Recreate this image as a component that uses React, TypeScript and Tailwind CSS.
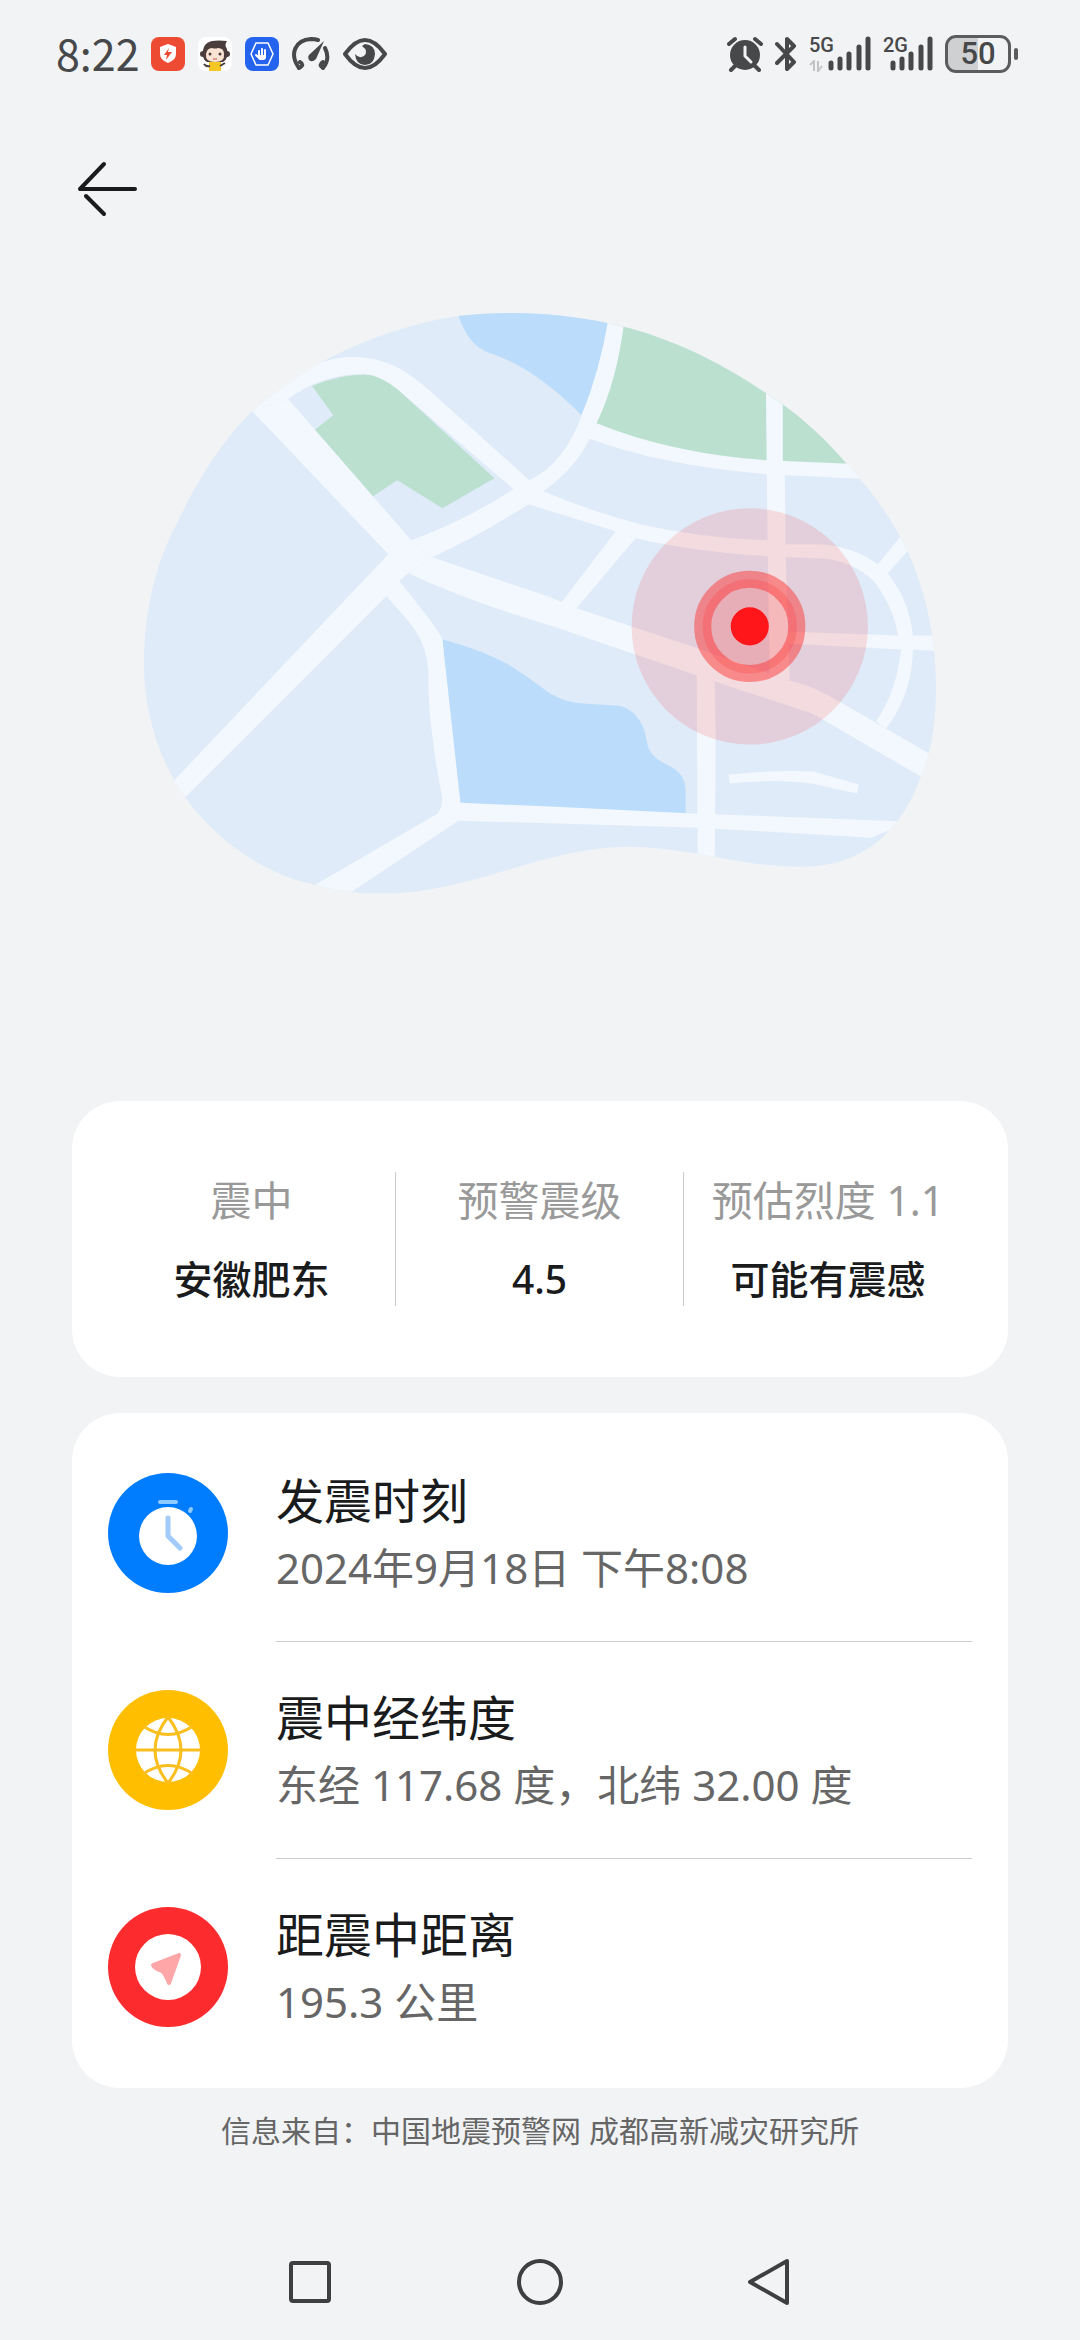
import React from 'react';

interface SummaryItem {
    label: string;
    value: string;
}

interface DetailItem {
    title: string;
    text: string;
    icon: React.ReactNode;
}

const BLOB =
    'M144 664 C144 610 156 561 178 521 C196 482 221 442 252 411 C271 395 296 377 320 363 C362 340 410 323 458 316 C476 314 494 313 512 313 C545 313 578 317 607 323 C665 335 718 361 765 393 C798 414 824 438 846 464 C867 486 885 510 899 536 C923 580 935 635 935 687 C935 720 931 750 920 776 C911 802 897 823 880 838 C858 857 832 866 800 866 C765 866 735 860 697 853 C672 849 650 846 627 846 C600 846 575 851 550 857 C490 873 440 893 380 893 C357 893 335 890 315 884 C262 873 217 840 185 797 C158 758 144 710 144 664 Z';

const ROADS = [
    // arc above the park
    'M252 411 L285 360 L320 363 Q337 356 353 357 Q382 357 407 373 L423 385 L529 480 L543 491 L528 504 L513 489 L397 389 Q380 375 363 374 Q322 374 288 399 Z',
    // north west avenue
    'M252 411 L288 399 L411 540 L432 557 L408 573 L388 554 Z',
    // south west avenue
    'M388 554 L173 781 L185 797 L386 596 L399 581 L408 573 L420 555 Z',
    // centre to the south junction
    'M386 596 Q407 619 415 630 Q427 648 428 672 Q428 710 432 735 Q436 768 442 798 Q442 808 437 813 L315 884 L347 894 L458 820 L460 802 L442 639 Q437 627 399 581 Z',
    // south street
    'M455 802 L550 806 L697 813 L910 821 L870 837 L697 827 L458 820 Z',
    // main street to the east
    'M432 557 L550 597 L576 608 L698 648 L788 680 Q812 685 840 702 L935 757 L925 779 L822 719 Q812 713 808 712 L714 681 L550 625 Q470 602 408 573 Z',
    // centre to the northern lake
    'M411 540 Q467 519 513 489 L529 480 Q565 462 581 415 Q599 372 608 318 L624 318 Q617 380 596 423 Q580 465 543 491 L528 504 Q480 535 432 557 Z',
    // middle street with the eastern ring
    'M543 491 Q592 512 640 524 Q700 538 767 540 L784 544 L817 544 Q850 545 877 564 L903 532 L910 547 L887 573 Q908 600 912 635 L940 635 L940 651 L912 649 Q911 695 885 728 L875 721 Q896 690 900 649 L785 643 L785 631 L897 635 Q893 608 873 581 Q850 559 817 558 L784 557 L767 556 Q690 551 635 538 L615 531 L528 504 Z',
    'M615 531 L635 538 L576 608 L561 602 Z',
    'M765 380 L782 380 L782 461 L784 475 L785 557 L789 680 L769 675 L767 556 L766 474 Z',
    'M596 423 Q670 453 765 460 L860 464 L870 479 L766 474 Q660 465 588 438 Z',
    'M696 674 L714 681 L715 735 L714 860 L697 860 Z',
    'M728 774 Q775 769 813 771 L858 784 L856 793 L810 783 Q777 778 729 783 Z',
];

const EpicenterMap: React.FC = () => (
    <svg viewBox="144 312 791 582" className="w-full h-auto block" role="img" aria-label="震中地图">
        <defs>
            <clipPath id="map-shape">
                <path d={BLOB} />
            </clipPath>
        </defs>
        <g clipPath="url(#map-shape)">
            <rect x="140" y="308" width="800" height="590" fill="#dfebf8" />
            <path d="M458 316 C466 338 476 349 492 354 C522 364 552 386 581 415 L600 390 L612 305 L456 305 Z" fill="#bbddfb" />
            <path d="M442 639 Q495 653 523 674 C545 688 552 700 582 703 L615 705 C632 706 644 722 646 740 C650 770 684 758 685 790 L685 815 L459 806 Z" fill="#bbddfb" />
            <path d="M312 386 Q345 372 377 375 L397 389 L494 478 L442 508 L397 480 L371 497 L314 430 L333 415 Z" fill="#bbe0cf" />
            <path d="M615 310 L860 310 L860 464 L765 463 Q670 456 590 424 Z" fill="#bbe0cf" />
            {ROADS.map(d => <path key={d} d={d} fill="#f2f8fd" />)}
        </g>
        <circle cx="749" cy="626" r="118" fill="#ff1a1a" fillOpacity="0.13" />
        <circle cx="749" cy="626" r="39" fill="#ff1a1a" fillOpacity="0.18" />
        <circle cx="749" cy="626" r="47" fill="none" stroke="#ff1a1a" strokeOpacity="0.42" strokeWidth="17" />
        <circle cx="749" cy="626" r="43" fill="none" stroke="#ff1a1a" strokeOpacity="0.18" strokeWidth="8" />
        <circle cx="749" cy="626" r="19" fill="#ff161b" />
    </svg>
);

const SignalBars: React.FC<{ label: string; data?: boolean }> = ({ label, data }) => (
    <div className={`relative flex justify-end h-[36px] ${data ? 'w-[62px]' : 'w-[50px]'}`}>
        <span className="absolute left-0 top-0 text-[20px] leading-[18px] font-medium font-[Roboto,sans-serif]">{label}</span>
        {data && (
            <svg width="16" height="12" viewBox="0 0 16 12" className="absolute left-0 bottom-0" fill="none" stroke="#c2c3c5" strokeWidth="2">
                <path d="M1 5 L5 1 V11 M9 1 V11 L13 6" />
            </svg>
        )}
        <svg width="44" height="36" viewBox="0 0 44 36" stroke="currentColor" strokeWidth="5" strokeLinecap="round" fill="none">
            <path d="M4 27 V32 M13 23 V32 M22 18 V32 M32 11 V32 M41 3 V32" />
        </svg>
    </div>
);

const StatusBar: React.FC = () => (
    <header className="flex items-center justify-between h-[108px] pl-14 pr-[62px] text-[#47484a]">
        <div className="flex items-center gap-[13px]">
            <time className="pb-1 text-[43px] leading-[48px] w-[82px] whitespace-nowrap font-['Noto_Sans_CJK_SC',sans-serif]">8:22</time>
            <svg width="34" height="34" viewBox="0 0 34 34">
                <rect width="34" height="34" rx="8" fill="#ee4b33" />
                <path d="M17 7 L25 10 V17 Q25 23 17 26 Q9 23 9 17 V10 Z" fill="#fff" />
                <path d="M18 11 L13 18 H16 L15 23 L21 15 H17 Z" fill="#ee4b33" />
            </svg>
            <svg width="34" height="34" viewBox="0 0 34 34">
                <rect width="34" height="34" rx="8" fill="#fff" />
                <path d="M11 25 H23 V34 H11 Z" fill="#f5c722" />
                <path d="M6 27 Q8 30 12 29 M27 26 L22 29" stroke="#4a3d3b" strokeWidth="2" fill="none" />
                <circle cx="5" cy="17" r="3" fill="#4a3d3b" />
                <circle cx="29" cy="17" r="3" fill="#4a3d3b" />
                <path d="M5 18 Q4 6 14 4 Q20 3 29 4 Q26 8 29 12 Q31 22 25 25 H9 Q5 23 5 18 Z" fill="#4a3d3b" />
                <path d="M8 17 Q9 11 14 11 Q17 12 20 11 Q26 11 26 17 Q27 25 17 25 Q7 25 8 17 Z" fill="#fbe3d3" />
                <circle cx="12" cy="17" r="1.5" fill="#4a3d3b" />
                <circle cx="22" cy="17" r="1.5" fill="#4a3d3b" />
                <path d="M15 22 H19" stroke="#d8837b" strokeWidth="1.5" />
            </svg>
            <svg width="34" height="34" viewBox="0 0 34 34">
                <rect width="34" height="34" rx="8" fill="#2463ee" />
                <path d="M11 6 H23 L28 17 L23 28 H11 L6 17 Z" fill="none" stroke="#fff" strokeWidth="1.5" />
                <path d="M14 19 V14 M17 18 V12 M20 19 V13 M11 18 L15 22" fill="none" stroke="#fff" strokeWidth="2" strokeLinecap="round" />
                <path d="M13 18 H21 V20 Q21 23 18 23 H15 L12 19 Z" fill="#fff" />
            </svg>
            <svg width="38" height="36" viewBox="0 0 38 36" fill="none" stroke="currentColor" strokeWidth="4" strokeLinecap="round">
                <path d="M7 32 Q13 29 8 26 M7 32 C-3 18 3 4 19 3 Q23 3 26 4 M33 12 C37 20 36 26 31 32 M31 32 Q26 29 31 26" />
                <path d="M32 5 L24 23 Q20 27 17 24 Q15 20 18 18 Z" fill="currentColor" stroke="none" />
            </svg>
            <svg width="46" height="34" viewBox="0 0 46 34">
                <path d="M2 17 Q12 3 22 3 Q32 3 42 17 Q32 31 22 31 Q12 31 2 17 Z" fill="none" stroke="currentColor" strokeWidth="4" strokeLinejoin="round" />
                <path d="M22 7 Q32 8 32 17 Q31 28 22 28 Q13 28 12 17 Q16 22 21 19 Q26 14 19 9 Z" fill="currentColor" />
            </svg>
        </div>
        <div className="flex items-center gap-3">
            <svg width="36" height="36" viewBox="0 0 36 36">
                <path d="M2 8 L8 3 M28 3 L34 8 M8 30 L4 34 M28 30 L32 34" stroke="currentColor" strokeWidth="4" strokeLinecap="round" />
                <circle cx="18" cy="19" r="15" fill="currentColor" />
                <path d="M18 11 V20 L24 26" stroke="#f1f3f5" strokeWidth="3" strokeLinecap="round" fill="none" />
            </svg>
            <svg width="22" height="36" viewBox="0 0 22 36" fill="none" stroke="currentColor" strokeWidth="4" strokeLinejoin="round" strokeLinecap="round">
                <path d="M2 8 L19 26 L12 33 V20 M2 27 L19 10 L12 3 V16" />
            </svg>
            <SignalBars label="5G" data />
            <SignalBars label="2G" />
            <div className="flex items-center gap-[3px]">
                <div className="w-[66px] h-[38px] rounded-[11px] border-[3px] border-[#5b5c5e] bg-linear-to-r from-[#cfd0d2] from-50% to-transparent to-50% text-center text-[31px] leading-[32px] font-medium font-[Roboto,sans-serif]">50</div>
                <div className="w-1 h-3 rounded-full bg-[#5b5c5e]" />
            </div>
        </div>
    </header>
);

const ClockIcon: React.FC = () => (
    <svg width="120" height="120" viewBox="0 0 120 120" aria-hidden="true">
        <circle cx="60" cy="60" r="60" fill="#007dff" />
        <path d="M52 29 H68 M82 38 L83 36" stroke="#8ccaff" strokeWidth="4" strokeLinecap="round" />
        <circle cx="60" cy="63" r="29" fill="#fff" />
        <path d="M60 45 V63 L72 75" stroke="#a2cbf9" strokeWidth="5" strokeLinecap="round" strokeLinejoin="round" fill="none" />
    </svg>
);

const GlobeIcon: React.FC = () => (
    <svg width="120" height="120" viewBox="0 0 120 120" aria-hidden="true">
        <circle cx="60" cy="60" r="60" fill="#ffbf00" />
        <circle cx="60" cy="60" r="32" fill="#fff" />
        <path d="M27 60 H93 M60 27 Q34 60 60 93 M60 27 Q86 60 60 93 M35 36 Q60 53 85 36 M35 84 Q60 67 85 84" stroke="#fabe1e" strokeWidth="3" fill="none" />
    </svg>
);

const LocationIcon: React.FC = () => (
    <svg width="120" height="120" viewBox="0 0 120 120" aria-hidden="true">
        <circle cx="60" cy="60" r="60" fill="#fc2b2e" />
        <circle cx="60" cy="60" r="33" fill="#fff" />
        <path d="M71 48 L45 58 Q46 61 54 64 Q57 66 61 76 Z" fill="#ffa6a8" stroke="#ffa6a8" strokeWidth="4" strokeLinejoin="round" />
    </svg>
);

const summary: SummaryItem[] = [
    { label: '震中', value: '安徽肥东' },
    { label: '预警震级', value: '4.5' },
    { label: '预估烈度 1.1', value: '可能有震感' },
];

const details: DetailItem[] = [
    { title: '发震时刻', text: '2024年9月18日 下午8:08', icon: <ClockIcon /> },
    { title: '震中经纬度', text: '东经 117.68 度，北纬 32.00 度', icon: <GlobeIcon /> },
    { title: '距震中距离', text: '195.3 公里', icon: <LocationIcon /> },
];

const App: React.FC = () => {
    return (
        <div className="min-h-screen flex flex-col bg-[#f1f3f5] text-[#1a1b1c] font-['Noto_Sans','Noto_Sans_CJK_SC',sans-serif]">
            <StatusBar />

            <div className="flex items-center h-[162px] px-[72px]">
                <button className="p-1" aria-label="返回">
                    <svg width="64" height="56" viewBox="0 0 64 56" fill="none" stroke="#1a1b1c" strokeWidth="4" strokeLinecap="round" strokeLinejoin="round">
                        <path d="M28 3 L4 28 H59" />
                        <path d="M10 35 L28 53" />
                    </svg>
                </button>
            </div>

            <main className="flex-1 px-[72px]">
                <div className="px-[72px] pt-[42px]">
                    <EpicenterMap />
                </div>

                <section className="mt-[206px] bg-white rounded-[48px] px-9 py-[71px]">
                    <dl className="grid grid-cols-3 divide-x divide-[#cccccc]">
                        {summary.map(item => (
                            <div key={item.label} className="h-[134px] flex flex-col items-center whitespace-nowrap">
                                <dt className="text-[41px] leading-[56px] text-[#999999]">{item.label}</dt>
                                <dd className="mt-6 text-[39px] leading-[54px] font-medium">{item.value}</dd>
                            </div>
                        ))}
                    </dl>
                </section>

                <section className="mt-9 bg-white rounded-[48px] px-9 py-3">
                    <ul>
                        {details.map((item, index) => (
                            <li key={item.title} className="flex items-center gap-12">
                                <div className="shrink-0">{item.icon}</div>
                                <div className={`flex-1 h-[217px] flex flex-col justify-center gap-1 ${index < details.length - 1 ? 'border-b border-[#cccccc]' : ''}`}>
                                    <h2 className="text-[48px] leading-[66px]">{item.title}</h2>
                                    <p className="text-[42px] leading-[60px] text-[#666666]">{item.text}</p>
                                </div>
                            </li>
                        ))}
                    </ul>
                </section>

                <p className="mt-[22px] text-center text-[30px] leading-[42px] text-[#666666]">
                    信息来自：中国地震预警网 成都高新减灾研究所
                </p>
            </main>

            <nav className="flex justify-center h-[116px] text-[#3d3f41]">
                <button className="w-[230px] flex items-center justify-center" aria-label="最近任务">
                    <svg width="48" height="48" viewBox="0 0 48 48" fill="none" stroke="currentColor" strokeWidth="4">
                        <rect x="5" y="5" width="38" height="38" rx="2" />
                    </svg>
                </button>
                <button className="w-[230px] flex items-center justify-center" aria-label="主页">
                    <svg width="48" height="48" viewBox="0 0 48 48" fill="none" stroke="currentColor" strokeWidth="4">
                        <circle cx="24" cy="24" r="21" />
                    </svg>
                </button>
                <button className="w-[230px] flex items-center justify-center" aria-label="返回上一页">
                    <svg width="48" height="48" viewBox="0 0 48 48" fill="none" stroke="currentColor" strokeWidth="4" strokeLinejoin="round">
                        <path d="M41 3 V45 L4 24 Z" />
                    </svg>
                </button>
            </nav>
        </div>
    );
};

export default App;
